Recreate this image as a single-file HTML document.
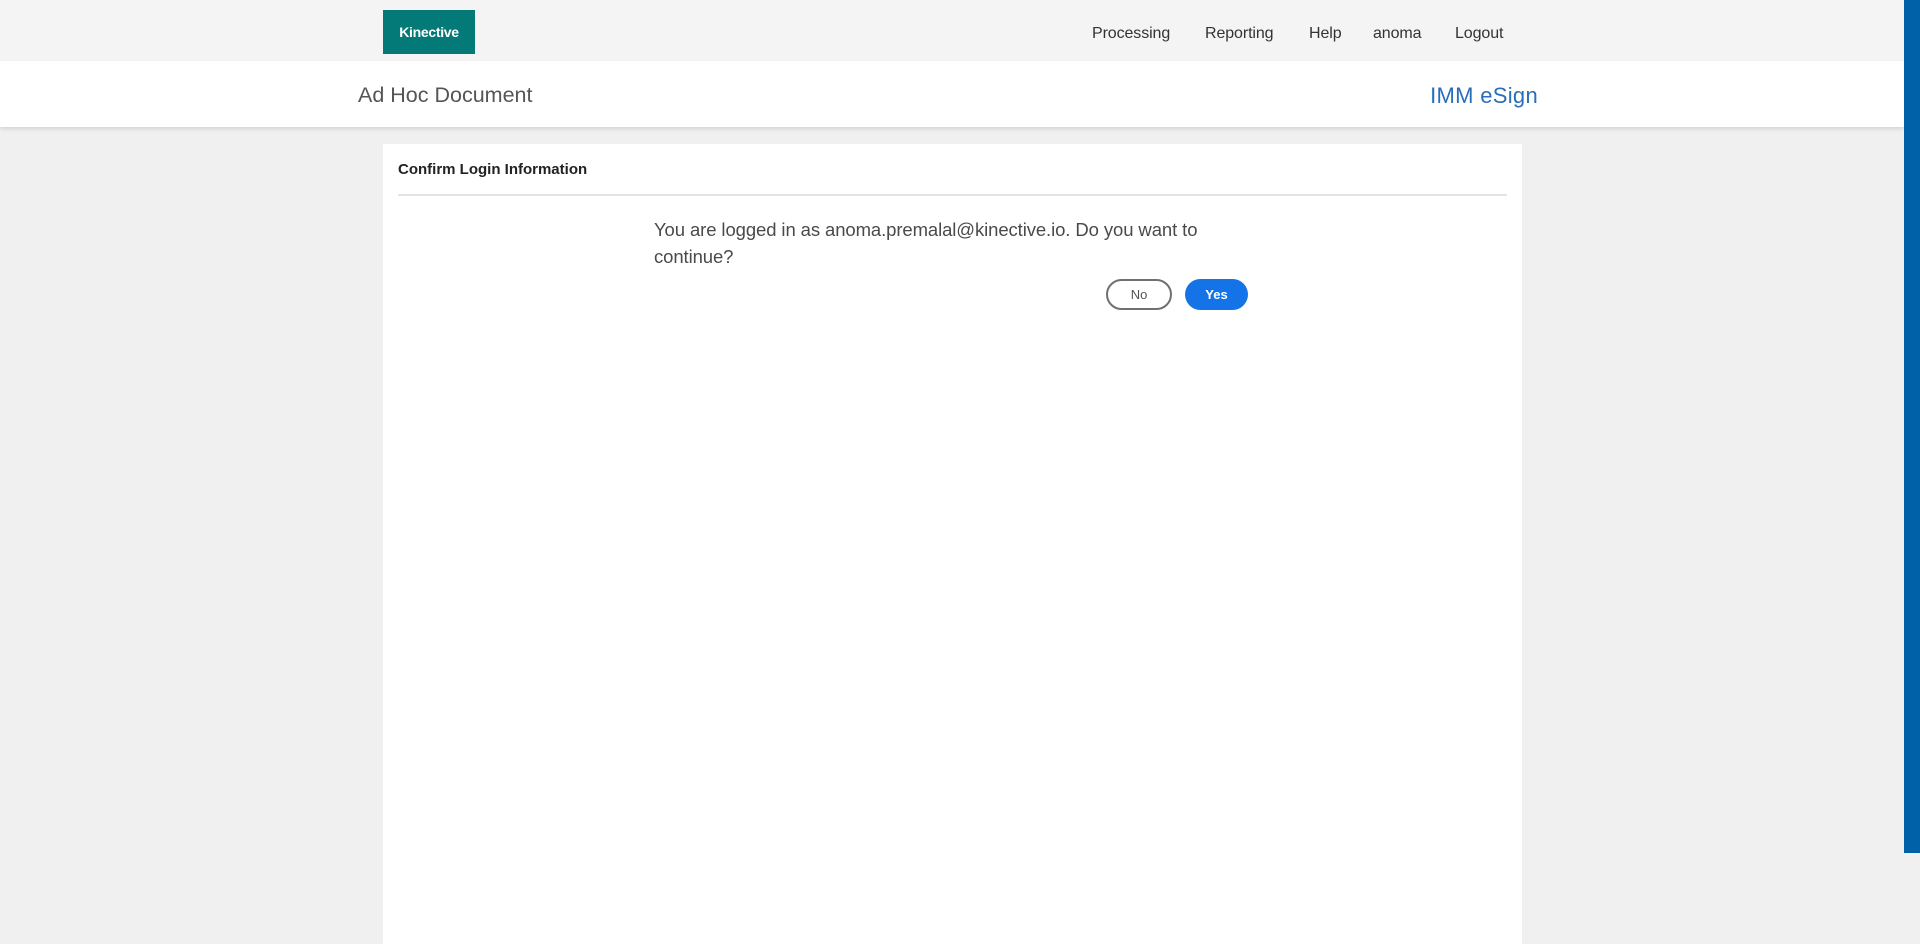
<!DOCTYPE html>
<html><head><meta charset="utf-8"><style>
*{margin:0;padding:0;box-sizing:border-box}
body{width:1920px;height:901px;overflow:hidden;background:#f0f0f0;font-family:"Liberation Sans",sans-serif;position:relative}
.top{position:absolute;left:0;top:0;width:1904px;height:61px;background:#f4f4f4}
.logo{position:absolute;left:383px;top:10px;width:92px;height:44px;background:#047a78;color:#fff;font-weight:bold;font-size:14px;line-height:44px;text-align:center;letter-spacing:-0.3px}
.nav{position:absolute;top:25px;font-size:16px;color:#333;letter-spacing:-0.1px}
.hdr{position:absolute;left:0;top:61px;width:1904px;height:66px;background:#fff;box-shadow:0 2px 4px rgba(0,0,0,.12)}
.t1{position:absolute;left:358px;top:22px;font-size:21.5px;color:#555;letter-spacing:0px}
.t2{position:absolute;right:366px;top:22px;font-size:22px;color:#2a6ebb;letter-spacing:0.3px}
.bar{position:absolute;left:1904px;top:0;width:16px;height:853px;background:#0060a8}
.card{position:absolute;left:383px;top:144px;width:1139px;height:800px;background:#fff}
.ct{position:absolute;left:15px;top:17px;font-size:15px;font-weight:bold;color:#222;letter-spacing:0px}
.dv{position:absolute;left:15px;top:50px;width:1109px;height:2px;background:#e4e4e4}
.msg{position:absolute;left:271px;top:72px;font-size:18.5px;line-height:27px;color:#4a4a4a;letter-spacing:-0.1px}
.btn{position:absolute;top:135px;height:31px;border-radius:16px;font-size:13px;line-height:31px;text-align:center}
.no{left:723px;width:66px;border:2px solid #707070;color:#555;line-height:27px}
.yes{left:802px;width:63px;background:#1473e6;color:#fff;font-weight:bold}
</style></head><body>
<div class="top">
<div class="logo">Kinective</div>
<span class="nav" style="left:1092px">Processing</span>
<span class="nav" style="left:1205px">Reporting</span>
<span class="nav" style="left:1309px">Help</span>
<span class="nav" style="left:1373px">anoma</span>
<span class="nav" style="left:1455px">Logout</span>
</div>
<div class="hdr"><span class="t1">Ad Hoc Document</span><span class="t2">IMM eSign</span></div>
<div class="bar"></div>
<div class="card">
<div class="ct">Confirm Login Information</div>
<div class="dv"></div>
<div class="msg">You are logged in as anoma.premalal@kinective.io. Do you want to<br>continue?</div>
<div class="btn no">No</div>
<div class="btn yes">Yes</div>
</div>
</body></html>
